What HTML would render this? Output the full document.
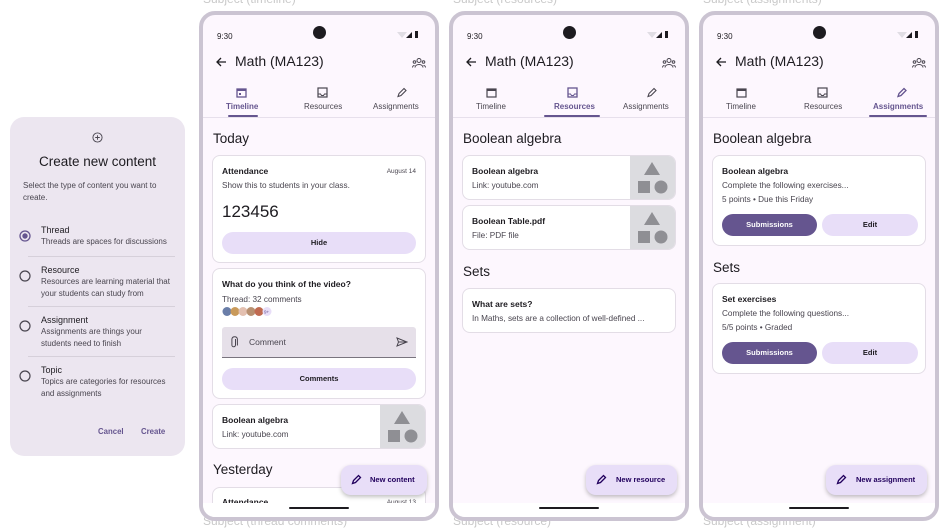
<!DOCTYPE html>
<html><head><meta charset="utf-8"><style>
*{margin:0;padding:0;box-sizing:border-box}
body{width:944px;height:526px;background:#fff;font-family:"Liberation Sans",sans-serif;color:#1d1b20;position:relative;overflow:hidden}
.a{position:absolute}
.lbl{position:absolute;font-size:12px;color:#c9c9c9;white-space:nowrap}
.ph{position:absolute;top:11px;width:240px;height:510px;border:4px solid #cbc4d2;border-radius:16px;background:#fdf7fe;overflow:hidden}
.ph .t{font-size:8px}
.card{position:absolute;left:9px;width:214px;background:#fff;border:1px solid #e3dde6;border-radius:8px;overflow:hidden}
.btn{position:absolute;height:22px;border-radius:11px;background:#e8def8;font-size:7.5px;font-weight:bold;text-align:center;line-height:22px;color:#1d1b20}
.btn.p{background:#65558f;color:#fff}
.h{position:absolute;left:10px;font-size:13.5px}
.ct{font-size:8.5px;font-weight:bold}
.cs{font-size:8.2px;color:#49454f}
.img{position:absolute;right:0;top:0;bottom:0;width:45px;background:#dcdce0}
.fab{position:absolute;height:30px;border-radius:10px;background:#e8def8;box-shadow:0 2px 4px rgba(0,0,0,.25);font-size:7.5px;font-weight:bold;line-height:30px;color:#21005d}
.nav{position:absolute;left:0;right:0;bottom:0;height:14px;background:#fff}
.nav div{position:absolute;left:86px;top:4px;width:60px;height:2px;background:#1d1b20;border-radius:1px}
.dd{font-size:8px;color:#49454f;line-height:11.5px}
</style></head><body>

<div class="a" style="left:10px;top:117px;width:175px;height:339px;background:#ece6f0;border-radius:14px">
 <svg class="a" style="left:82px;top:15px" width="11" height="11" viewBox="0 0 12 12"><circle cx="6" cy="6" r="5" fill="none" stroke="#49454f" stroke-width="1"/><path d="M6 3.5v5M3.5 6h5" stroke="#49454f" stroke-width="1"/></svg>
 <div class="a" style="left:0;right:0;top:37px;text-align:center;font-size:13.5px">Create new content</div>
 <div class="a dd" style="left:13px;top:63px;width:155px">Select the type of content you want to create.</div>
 <svg class="a" style="left:9px;top:113px" width="12" height="12"><circle cx="6" cy="6" r="5" fill="none" stroke="#65558f" stroke-width="1.3"/><circle cx="6" cy="6" r="2.7" fill="#65558f"/></svg>
 <div class="a" style="left:31px;top:108px;font-size:9px">Thread</div>
 <div class="a dd" style="left:31px;top:119px">Threads are spaces for discussions</div>
 <div class="a" style="left:18px;right:10px;top:139px;height:1px;background:#d6d0da"></div>
 <svg class="a" style="left:9px;top:153px" width="12" height="12"><circle cx="6" cy="6" r="5" fill="none" stroke="#49454f" stroke-width="1.2"/></svg>
 <div class="a" style="left:31px;top:148px;font-size:9px">Resource</div>
 <div class="a dd" style="left:31px;top:159px;width:144px">Resources are learning material that your students can study from</div>
 <div class="a" style="left:18px;right:10px;top:189px;height:1px;background:#d6d0da"></div>
 <svg class="a" style="left:9px;top:203px" width="12" height="12"><circle cx="6" cy="6" r="5" fill="none" stroke="#49454f" stroke-width="1.2"/></svg>
 <div class="a" style="left:31px;top:198px;font-size:9px">Assignment</div>
 <div class="a dd" style="left:31px;top:209px;width:120px">Assignments are things your students need to finish</div>
 <div class="a" style="left:18px;right:10px;top:239px;height:1px;background:#d6d0da"></div>
 <svg class="a" style="left:9px;top:253px" width="12" height="12"><circle cx="6" cy="6" r="5" fill="none" stroke="#49454f" stroke-width="1.2"/></svg>
 <div class="a" style="left:31px;top:248px;font-size:9px">Topic</div>
 <div class="a dd" style="left:31px;top:259px;width:140px">Topics are categories for resources and assignments</div>
 <div class="a" style="left:88px;top:310px;font-size:7.8px;font-weight:bold;color:#65558f">Cancel</div>
 <div class="a" style="left:131px;top:310px;font-size:7.8px;font-weight:bold;color:#65558f">Create</div>
</div>

<div class="lbl" style="left:203px;top:-8px">Subject (timeline)</div>
<div class="lbl" style="left:453px;top:-8px">Subject (resources)</div>
<div class="lbl" style="left:703px;top:-8px">Subject (assignments)</div>
<div class="lbl" style="left:203px;top:514px">Subject (thread comments)</div>
<div class="lbl" style="left:453px;top:514px">Subject (resource)</div>
<div class="lbl" style="left:703px;top:514px">Subject (assignment)</div>

<div class="ph" style="left:199px">
 <div class="a t" style="left:14px;top:17px">9:30</div>
 <div class="a" style="left:110px;top:11px;width:13px;height:13px;border-radius:50%;background:#1d1b20"></div>
 <svg class="a" style="left:194px;top:15px" width="24" height="9"><path d="M0 2 L10 2 L5 8Z" fill="#e0dde4"/><path d="M9 8 L15 2 L15 8Z" fill="#1d1b20"/><rect x="18" y="1" width="3" height="7" fill="#1d1b20"/></svg>
 <svg class="a" style="left:12px;top:41px" width="12" height="12" viewBox="0 0 12 12"><path d="M11 6H2M6 2L2 6l4 4" fill="none" stroke="#1d1b20" stroke-width="1.3"/></svg>
 <div class="a" style="left:32px;top:38px;font-size:14px">Math (MA123)</div>
 <svg class="a" style="left:209px;top:43px" width="14" height="10" viewBox="0 0 14 10"><circle cx="7" cy="2.5" r="2" fill="none" stroke="#49454f"/><circle cx="2.5" cy="4" r="1.3" fill="none" stroke="#49454f"/><circle cx="11.5" cy="4" r="1.3" fill="none" stroke="#49454f"/><path d="M3 9.5c0-2 2-3 4-3s4 1 4 3M0.5 9.5c0-1.3 1-2 2-2M13.5 9.5c0-1.3-1-2-2-2" fill="none" stroke="#49454f"/></svg>
 <svg class="a" style="left:33px;top:72px" width="11" height="11"><rect x="1" y="2" width="9" height="8" fill="none" stroke="#65558f" stroke-width="1.3"/><rect x="1" y="2" width="9" height="2" fill="#65558f"/><rect x="3" y="6" width="2" height="2" fill="#65558f"/></svg>
 <div class="a t" style="left:23px;top:87px;color:#65558f;font-weight:bold">Timeline</div>
 <div class="a" style="left:25px;top:100px;width:30px;height:2px;background:#65558f;border-radius:1px"></div>
 <svg class="a" style="left:114px;top:72px" width="11" height="11"><rect x="1" y="1" width="9" height="9" fill="none" stroke="#49454f" stroke-width="1.2"/><path d="M1 7h2.5l1 1.5h2l1-1.5H10" fill="none" stroke="#49454f"/></svg>
 <div class="a t" style="left:101px;top:87px;color:#49454f">Resources</div>
 <svg class="a" style="left:193px;top:72px" width="11" height="11"><path d="M2 9.5l1-3 5-5 2 2-5 5z" fill="none" stroke="#49454f" stroke-width="1.1"/></svg>
 <div class="a t" style="left:170px;top:87px;color:#49454f">Assignments</div>
 <div class="a" style="left:0;right:0;top:102px;height:1px;background:#e7e0ec"></div>

 <div class="h" style="top:116px">Today</div>
 <div class="card" style="top:140px;height:108px">
  <div class="a ct" style="left:9px;top:10px">Attendance</div>
  <div class="a" style="right:9px;top:12px;font-size:6.5px;color:#49454f">August 14</div>
  <div class="a cs" style="left:9px;top:25px">Show this to students in your class.</div>
  <div class="a" style="left:9px;top:46px;font-size:17px">123456</div>
  <div class="btn" style="left:9px;right:9px;top:76px">Hide</div>
 </div>
 <div class="card" style="top:253px;height:131px">
  <div class="a ct" style="left:9px;top:10px">What do you think of the video?</div>
  <div class="a cs" style="left:9px;top:26px">Thread: 32 comments</div>
  <svg class="a" style="left:9px;top:37px" width="50" height="11"><circle cx="5" cy="5.5" r="4.5" fill="#6a7ea8"/><circle cx="13" cy="5.5" r="4.5" fill="#c99a5a"/><circle cx="21" cy="5.5" r="4.5" fill="#e3c0b0"/><circle cx="29" cy="5.5" r="4.5" fill="#b89070"/><circle cx="37" cy="5.5" r="4.5" fill="#c06a50"/><circle cx="45" cy="5.5" r="4.5" fill="#e8def8"/><text x="42" y="7.5" font-size="4.5" fill="#65558f" font-family="Liberation Sans">9+</text></svg>
  <div class="a" style="left:9px;right:9px;top:58px;height:31px;background:#e6e0e9;border-bottom:1px solid #79747e;border-radius:3px 3px 0 0">
   <svg class="a" style="left:8px;top:9px" width="8" height="13"><path d="M5.5 3v6a1.8 1.8 0 0 1-3.6 0V3a2.8 2.8 0 0 1 5.5 0v6.5" fill="none" stroke="#49454f"/></svg>
   <div class="a" style="left:27px;top:10px;font-size:8.5px;color:#49454f">Comment</div>
   <svg class="a" style="right:8px;top:10px" width="12" height="10"><path d="M1 1l10 4-10 4 1.5-4z M2.5 5h8" fill="none" stroke="#49454f"/></svg>
  </div>
  <div class="btn" style="left:9px;right:9px;top:99px">Comments</div>
 </div>
 <div class="card" style="top:389px;height:45px">
  <div class="a ct" style="left:9px;top:10px">Boolean algebra</div>
  <div class="a cs" style="left:9px;top:25px">Link: youtube.com</div>
  <div class="img"><svg width="45" height="45"><path d="M22 6l8 13h-16z" fill="#8f8f94"/><rect x="8" y="25" width="12" height="12" fill="#8f8f94"/><circle cx="31" cy="31" r="6.5" fill="#8f8f94"/></svg></div>
 </div>
 <div class="h" style="top:447px">Yesterday</div>
 <div class="card" style="top:472px;height:40px"><div class="a ct" style="left:9px;top:9px">Attendance</div><div class="a" style="right:9px;top:11px;font-size:6.5px;color:#49454f">August 13</div></div>
 <div class="fab" style="left:138px;top:450px;width:86px"><svg class="a" style="left:10px;top:9px" width="11" height="11"><path d="M1.5 9.5l1-3 5-5 2 2-5 5z" fill="none" stroke="#21005d" stroke-width="1.3"/></svg><span style="position:absolute;left:29px">New content</span></div>
 <div class="nav"><div></div></div>
</div>

<div class="ph" style="left:449px">
 <div class="a t" style="left:14px;top:17px">9:30</div>
 <div class="a" style="left:110px;top:11px;width:13px;height:13px;border-radius:50%;background:#1d1b20"></div>
 <svg class="a" style="left:194px;top:15px" width="24" height="9"><path d="M0 2 L10 2 L5 8Z" fill="#e0dde4"/><path d="M9 8 L15 2 L15 8Z" fill="#1d1b20"/><rect x="18" y="1" width="3" height="7" fill="#1d1b20"/></svg>
 <svg class="a" style="left:12px;top:41px" width="12" height="12" viewBox="0 0 12 12"><path d="M11 6H2M6 2L2 6l4 4" fill="none" stroke="#1d1b20" stroke-width="1.3"/></svg>
 <div class="a" style="left:32px;top:38px;font-size:14px">Math (MA123)</div>
 <svg class="a" style="left:209px;top:43px" width="14" height="10" viewBox="0 0 14 10"><circle cx="7" cy="2.5" r="2" fill="none" stroke="#49454f"/><circle cx="2.5" cy="4" r="1.3" fill="none" stroke="#49454f"/><circle cx="11.5" cy="4" r="1.3" fill="none" stroke="#49454f"/><path d="M3 9.5c0-2 2-3 4-3s4 1 4 3M0.5 9.5c0-1.3 1-2 2-2M13.5 9.5c0-1.3-1-2-2-2" fill="none" stroke="#49454f"/></svg>
 <svg class="a" style="left:33px;top:72px" width="11" height="11"><rect x="1" y="2" width="9" height="8" fill="none" stroke="#49454f" stroke-width="1.2"/><rect x="1" y="2" width="9" height="2" fill="#49454f"/></svg>
 <div class="a t" style="left:23px;top:87px;color:#49454f">Timeline</div>
 <svg class="a" style="left:114px;top:72px" width="11" height="11"><rect x="1" y="1" width="9" height="9" fill="none" stroke="#65558f" stroke-width="1.3"/><path d="M1 7h2.5l1 1.5h2l1-1.5H10" fill="none" stroke="#65558f"/></svg>
 <div class="a t" style="left:101px;top:87px;color:#65558f;font-weight:bold">Resources</div>
 <div class="a" style="left:91px;top:100px;width:56px;height:2px;background:#65558f;border-radius:1px"></div>
 <svg class="a" style="left:193px;top:72px" width="11" height="11"><path d="M2 9.5l1-3 5-5 2 2-5 5z" fill="none" stroke="#49454f" stroke-width="1.1"/></svg>
 <div class="a t" style="left:170px;top:87px;color:#49454f">Assignments</div>
 <div class="a" style="left:0;right:0;top:102px;height:1px;background:#e7e0ec"></div>

 <div class="h" style="top:116px">Boolean algebra</div>
 <div class="card" style="top:140px;height:45px">
  <div class="a ct" style="left:9px;top:10px">Boolean algebra</div>
  <div class="a cs" style="left:9px;top:25px">Link: youtube.com</div>
  <div class="img"><svg width="45" height="45"><path d="M22 6l8 13h-16z" fill="#8f8f94"/><rect x="8" y="25" width="12" height="12" fill="#8f8f94"/><circle cx="31" cy="31" r="6.5" fill="#8f8f94"/></svg></div>
 </div>
 <div class="card" style="top:190px;height:45px">
  <div class="a ct" style="left:9px;top:10px">Boolean Table.pdf</div>
  <div class="a cs" style="left:9px;top:25px">File: PDF file</div>
  <div class="img"><svg width="45" height="45"><path d="M22 6l8 13h-16z" fill="#8f8f94"/><rect x="8" y="25" width="12" height="12" fill="#8f8f94"/><circle cx="31" cy="31" r="6.5" fill="#8f8f94"/></svg></div>
 </div>
 <div class="h" style="top:249px">Sets</div>
 <div class="card" style="top:273px;height:45px">
  <div class="a ct" style="left:9px;top:10px">What are sets?</div>
  <div class="a cs" style="left:9px;top:25px">In Maths, sets are a collection of well-defined ...</div>
 </div>
 <div class="fab" style="left:133px;top:450px;width:91px"><svg class="a" style="left:10px;top:9px" width="11" height="11"><path d="M1.5 9.5l1-3 5-5 2 2-5 5z" fill="none" stroke="#21005d" stroke-width="1.3"/></svg><span style="position:absolute;left:30px">New resource</span></div>
 <div class="nav"><div></div></div>
</div>

<div class="ph" style="left:699px">
 <div class="a t" style="left:14px;top:17px">9:30</div>
 <div class="a" style="left:110px;top:11px;width:13px;height:13px;border-radius:50%;background:#1d1b20"></div>
 <svg class="a" style="left:194px;top:15px" width="24" height="9"><path d="M0 2 L10 2 L5 8Z" fill="#e0dde4"/><path d="M9 8 L15 2 L15 8Z" fill="#1d1b20"/><rect x="18" y="1" width="3" height="7" fill="#1d1b20"/></svg>
 <svg class="a" style="left:12px;top:41px" width="12" height="12" viewBox="0 0 12 12"><path d="M11 6H2M6 2L2 6l4 4" fill="none" stroke="#1d1b20" stroke-width="1.3"/></svg>
 <div class="a" style="left:32px;top:38px;font-size:14px">Math (MA123)</div>
 <svg class="a" style="left:209px;top:43px" width="14" height="10" viewBox="0 0 14 10"><circle cx="7" cy="2.5" r="2" fill="none" stroke="#49454f"/><circle cx="2.5" cy="4" r="1.3" fill="none" stroke="#49454f"/><circle cx="11.5" cy="4" r="1.3" fill="none" stroke="#49454f"/><path d="M3 9.5c0-2 2-3 4-3s4 1 4 3M0.5 9.5c0-1.3 1-2 2-2M13.5 9.5c0-1.3-1-2-2-2" fill="none" stroke="#49454f"/></svg>
 <svg class="a" style="left:33px;top:72px" width="11" height="11"><rect x="1" y="2" width="9" height="8" fill="none" stroke="#49454f" stroke-width="1.2"/><rect x="1" y="2" width="9" height="2" fill="#49454f"/></svg>
 <div class="a t" style="left:23px;top:87px;color:#49454f">Timeline</div>
 <svg class="a" style="left:114px;top:72px" width="11" height="11"><rect x="1" y="1" width="9" height="9" fill="none" stroke="#49454f" stroke-width="1.2"/><path d="M1 7h2.5l1 1.5h2l1-1.5H10" fill="none" stroke="#49454f"/></svg>
 <div class="a t" style="left:101px;top:87px;color:#49454f">Resources</div>
 <svg class="a" style="left:193px;top:72px" width="11" height="11"><path d="M2 9.5l1-3 5-5 2 2-5 5z" fill="none" stroke="#65558f" stroke-width="1.3"/></svg>
 <div class="a t" style="left:170px;top:87px;color:#65558f;font-weight:bold">Assignments</div>
 <div class="a" style="left:166px;top:100px;width:58px;height:2px;background:#65558f;border-radius:1px"></div>
 <div class="a" style="left:0;right:0;top:102px;height:1px;background:#e7e0ec"></div>

 <div class="h" style="top:116px">Boolean algebra</div>
 <div class="card" style="top:140px;height:91px">
  <div class="a ct" style="left:9px;top:10px">Boolean algebra</div>
  <div class="a cs" style="left:9px;top:25px">Complete the following exercises...</div>
  <div class="a cs" style="left:9px;top:39px">5 points • Due this Friday</div>
  <div class="btn p" style="left:9px;width:95px;top:58px">Submissions</div>
  <div class="btn" style="left:109px;width:96px;top:58px">Edit</div>
 </div>
 <div class="h" style="top:245px">Sets</div>
 <div class="card" style="top:268px;height:91px">
  <div class="a ct" style="left:9px;top:10px">Set exercises</div>
  <div class="a cs" style="left:9px;top:25px">Complete the following questions...</div>
  <div class="a cs" style="left:9px;top:39px">5/5 points • Graded</div>
  <div class="btn p" style="left:9px;width:95px;top:58px">Submissions</div>
  <div class="btn" style="left:109px;width:96px;top:58px">Edit</div>
 </div>
 <div class="fab" style="left:123px;top:450px;width:101px"><svg class="a" style="left:10px;top:9px" width="11" height="11"><path d="M1.5 9.5l1-3 5-5 2 2-5 5z" fill="none" stroke="#21005d" stroke-width="1.3"/></svg><span style="position:absolute;left:30px">New assignment</span></div>
 <div class="nav"><div></div></div>
</div>
</body></html>
